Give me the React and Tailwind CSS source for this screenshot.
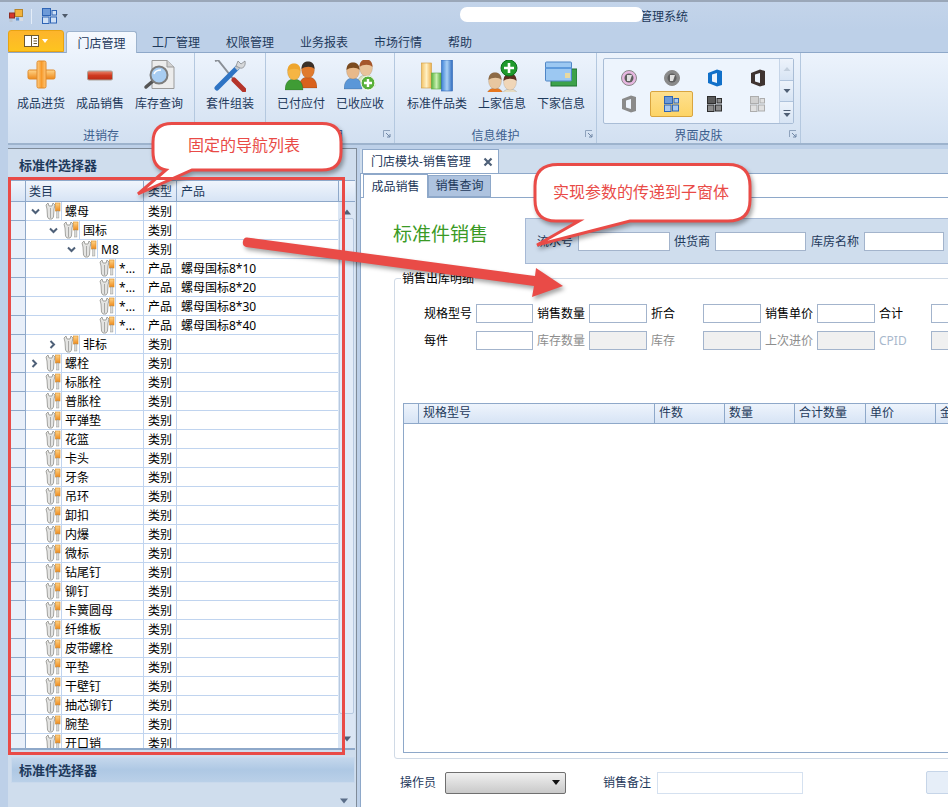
import React from 'react';

const treeRows = [
  { name: '螺母', depth: 0, open: true },
  { name: '国标', depth: 1, open: true },
  { name: 'M8', depth: 2, open: true },
  { name: '*...', depth: 3, type: '产品', product: '螺母国标8*10' },
  { name: '*...', depth: 3, type: '产品', product: '螺母国标8*20' },
  { name: '*...', depth: 3, type: '产品', product: '螺母国标8*30' },
  { name: '*...', depth: 3, type: '产品', product: '螺母国标8*40' },
  { name: '非标', depth: 1, open: false },
  { name: '螺栓', depth: 0, open: false },
  ...['标胀栓', '普胀栓', '平弹垫', '花篮', '卡头', '牙条', '吊环', '卸扣', '内爆', '微标', '钻尾钉', '铆钉', '卡簧圆母', '纤维板', '皮带螺栓', '平垫', '干壁钉', '抽芯铆钉', '腕垫', '开口销'].map((name) => ({ name, depth: 0 })),
];

const navTabs = ['工厂管理', '权限管理', '业务报表', '市场行情', '帮助'];

function Defs() {
  return (
    <svg width="0" height="0" className="absolute">
      <defs>
        <linearGradient id="orangeV" x1="0" y1="0" x2="0" y2="1">
          <stop offset="0" stopColor="#ffd58a" />
          <stop offset="1" stopColor="#ee8a1c" />
        </linearGradient>
        <linearGradient id="orangeH" x1="0" y1="0" x2="1" y2="0">
          <stop offset="0" stopColor="#ffcf86" />
          <stop offset="0.5" stopColor="#f79a2b" />
          <stop offset="1" stopColor="#ffc779" />
        </linearGradient>
        <linearGradient id="redV" x1="0" y1="0" x2="0" y2="1">
          <stop offset="0" stopColor="#e9876d" />
          <stop offset="0.5" stopColor="#cf3a20" />
          <stop offset="1" stopColor="#b92a15" />
        </linearGradient>
        <linearGradient id="blueV" x1="0" y1="0" x2="1" y2="0">
          <stop offset="0" stopColor="#3f82d8" />
          <stop offset="0.5" stopColor="#a9d0f5" />
          <stop offset="1" stopColor="#2f6cc0" />
        </linearGradient>
        <linearGradient id="yellowV" x1="0" y1="0" x2="1" y2="0">
          <stop offset="0" stopColor="#f3c265" />
          <stop offset="0.5" stopColor="#fff0c4" />
          <stop offset="1" stopColor="#eeb04c" />
        </linearGradient>
        <linearGradient id="greenV" x1="0" y1="0" x2="1" y2="0">
          <stop offset="0" stopColor="#5ab540" />
          <stop offset="0.5" stopColor="#c9efb0" />
          <stop offset="1" stopColor="#4ba536" />
        </linearGradient>
      </defs>
    </svg>
  );
}

function TreeIcon() {
  return (
    <svg width="16" height="18" viewBox="0 0 16 18" className="shrink-0">
      <path d="M1 3 L3 1 L4 4 L7 4 L8 1 L10 3 L9 7 L8.5 15 L7 17 L4 17 L2.5 15 L2 7 Z" fill="#e4e4e2" stroke="#8f8f8c" strokeWidth="0.8" />
      <path d="M5.5 6 V16" stroke="#a8a8a6" strokeWidth="1" />
      <rect x="10.5" y="1" width="4.5" height="8" fill="url(#orangeV)" stroke="#d98a22" strokeWidth="0.6" />
      <rect x="11.7" y="9" width="2.2" height="7" fill="#d9d9d6" stroke="#9a9a96" strokeWidth="0.5" />
    </svg>
  );
}

function Person({ x, y, skin, hair, body }) {
  return (
    <g transform={`translate(${x} ${y})`}>
      <path d="M0 27 C0 19 4 16 9 16 C14 16 18 19 18 27 Z" fill={body} stroke="#00000040" strokeWidth="0.6" />
      <ellipse cx="9" cy="9" rx="6.5" ry="8" fill={skin} stroke="#00000030" strokeWidth="0.5" />
      <path d="M2.5 8 C2.5 2 6 0.5 9 0.5 C12 0.5 15.5 2 15.5 8 C13 5 6 5 2.5 8 Z" fill={hair} />
    </g>
  );
}

function RibbonIcon({ kind }) {
  if (kind === 'plus') {
    return (
      <svg width="32" height="32" viewBox="0 0 32 32">
        <rect x="3" y="10" width="27" height="9" rx="1.5" fill="url(#orangeV)" stroke="#e08a2b" />
        <rect x="12" y="1" width="9" height="27" rx="1.5" fill="url(#orangeH)" stroke="#e08a2b" />
      </svg>
    );
  }
  if (kind === 'minus') {
    return (
      <svg width="32" height="32" viewBox="0 0 32 32">
        <rect x="3.5" y="11" width="25" height="9" rx="1.5" fill="url(#redV)" stroke="#a8a29a" />
      </svg>
    );
  }
  if (kind === 'search') {
    return (
      <svg width="32" height="32" viewBox="0 0 32 32">
        <path d="M9 0.5 H24 L31 7 V28.5 H9 Z" fill="#ececec" stroke="#9b9b9b" />
        <path d="M24 0.5 V7 H31" fill="#d2d2d2" stroke="#9b9b9b" />
        <path d="M10 21 L3 27" stroke="#555" strokeWidth="3.5" strokeLinecap="round" />
        <circle cx="16" cy="15" r="8.5" fill="#a8cdf2" stroke="#7d7d7d" strokeWidth="2" />
        <path d="M11 14 C12 11 15 10 18 10" stroke="#fff" strokeWidth="1.5" fill="none" />
      </svg>
    );
  }
  if (kind === 'tools') {
    return (
      <svg width="32" height="32" viewBox="0 0 32 32">
        <path d="M1 1 L4 0 L24 25" stroke="#8a8f96" strokeWidth="2" fill="none" />
        <path d="M20 20 L30 30" stroke="#b5342a" strokeWidth="5" strokeLinecap="round" />
        <path d="M23 8 L3 28" stroke="#2f74c4" strokeWidth="5" strokeLinecap="round" />
        <path d="M22 9 L27 4" stroke="#c4c8cc" strokeWidth="4" />
        <path d="M24 1 L27 4 L31 1 C32 6 29 9 26 8 L22 6 Z" fill="#d6d8da" stroke="#7b7f84" strokeWidth="0.7" />
      </svg>
    );
  }
  if (kind === 'paid') {
    return (
      <svg width="32" height="32" viewBox="0 0 32 32">
        <Person x={14} y={1} skin="#e07a2e" hair="#3a3028" body="#d9611c" />
        <Person x={0} y={3} skin="#f5b544" hair="#eea52d" body="#3f9c35" />
      </svg>
    );
  }
  if (kind === 'received') {
    return (
      <svg width="32" height="32" viewBox="0 0 32 32">
        <Person x={13} y={-1} skin="#e8c39a" hair="#a5562b" body="#d8e3c0" />
        <Person x={0} y={2} skin="#e8b98a" hair="#7a4a1f" body="#5b97d8" />
        <circle cx="24" cy="23" r="7" fill="#58b03a" stroke="#fff" strokeWidth="1" />
        <path d="M24 19 V27 M20 23 H28" stroke="#fff" strokeWidth="2.4" />
      </svg>
    );
  }
  if (kind === 'chart') {
    return (
      <svg width="32" height="32" viewBox="0 0 32 32">
        <rect x="0.5" y="3" width="10" height="25" fill="url(#yellowV)" stroke="#cf9b3d" strokeWidth="0.6" />
        <rect x="10.5" y="13" width="10" height="16" fill="url(#greenV)" stroke="#5ba745" strokeWidth="0.6" />
        <rect x="20.5" y="0" width="11" height="31" fill="url(#blueV)" stroke="#2d66b4" strokeWidth="0.6" />
      </svg>
    );
  }
  if (kind === 'upstream') {
    return (
      <svg width="32" height="32" viewBox="0 0 32 32">
        <Person x={0} y={12} skin="#e8c7a0" hair="#8d6a45" body="#e8771e" />
        <Person x={15} y={13} skin="#f0d6b8" hair="#5a2f20" body="#e6dcc4" />
        <circle cx="23" cy="8" r="8" fill="#1f9a2c" stroke="#0d6f1c" />
        <path d="M23 3 V13 M18 8 H28" stroke="#fff" strokeWidth="2.6" />
      </svg>
    );
  }
  return (
    <svg width="32" height="32" viewBox="0 0 32 32">
      <rect x="6" y="9" width="26" height="17" fill="#3da24a" stroke="#1f7030" />
      <rect x="0.5" y="2" width="26" height="19" rx="1" fill="#9cc8f2" stroke="#4f86c6" />
      <rect x="0.5" y="7" width="26" height="2" fill="#5f9bdc" />
      <rect x="20" y="13" width="5" height="5" fill="#e8d9a0" />
    </svg>
  );
}

function RibbonButton({ icon, label }) {
  return (
    <div className="flex flex-col items-center shrink-0">
      <div className="h-[32px] w-[32px] mt-[7px]">
        <RibbonIcon kind={icon} />
      </div>
      <span className="mt-[4px] leading-[16px] whitespace-nowrap">{label}</span>
    </div>
  );
}

function Launcher() {
  return (
    <svg width="8" height="8" viewBox="0 0 8 8" className="absolute right-[3px] bottom-[5px]">
      <path d="M0.5 7 V0.5 H7" stroke="#8fa3bd" fill="none" />
      <path d="M3 3 L7 7 M7 4 V7 H4" stroke="#6f86a5" fill="none" />
    </svg>
  );
}

function RibbonGroup({ width, title, className, titleClass = 'justify-center', launcher, children }) {
  return (
    <div className="relative flex flex-col shrink-0 border-r border-[#b4c8df] h-full" style={{ width }}>
      <div className={`flex h-[72px] ${className}`}>{children}</div>
      <div className={`flex-1 flex items-center text-[#3d5f8f] leading-none pt-[3px] ${titleClass}`}>{title}</div>
      {launcher && <Launcher />}
    </div>
  );
}

function OfficeLogo({ color }) {
  return (
    <svg width="16" height="18" viewBox="0 0 16 18">
      <path fillRule="evenodd" d="M1 4 L10 0.5 L15 2 V16 L10 17.5 L1 14 Z M5 5.5 V12.5 L10 14 V4 Z" fill={color} />
    </svg>
  );
}

function VistaLogo({ fill }) {
  return (
    <svg width="16" height="16" viewBox="0 0 16 16">
      <circle cx="8" cy="8" r="7.5" fill={fill} stroke="#8a8a8a" />
      <circle cx="8" cy="8" r="4.5" fill="#5f5f5f" />
      <path d="M6 5 H11 L9 11 H6 Z" fill="#e0e0e0" />
    </svg>
  );
}

function SquaresLogo({ a, b, c }) {
  return (
    <svg width="15" height="16" viewBox="0 0 15 16">
      <rect x="0.5" y="0.5" width="8" height="7" fill={a} stroke={c} />
      <rect x="10" y="2.5" width="4.5" height="4.5" fill={b} stroke={c} />
      <rect x="0.5" y="9" width="6.5" height="6.5" fill={b} stroke={c} />
      <rect x="8.5" y="9" width="6" height="6" fill={b} stroke={c} />
    </svg>
  );
}

function SkinCell({ selected, children }) {
  return (
    <div className={`flex items-center justify-center h-[26px] rounded-[2px] ${selected ? 'bg-gradient-to-b from-[#fee08e] to-[#fdd465] border border-[#d9a53f]' : ''}`}>
      {children}
    </div>
  );
}

function ScrollStep({ path, faded }) {
  return (
    <div className="flex-1 flex items-center justify-center border-b border-[#afc3dc] last:border-b-0 bg-gradient-to-b from-[#edf3fb] to-[#d7e4f4]">
      <svg width="8" height="8" viewBox="0 0 8 8">
        <path d={path} fill={faded ? '#c3cfdd' : '#4f5f75'} />
      </svg>
    </div>
  );
}

function Ribbon() {
  return (
    <div className="ml-2 h-[93px] flex border-t border-[#8ea8c9] border-b-2 border-b-[#9db3cd] bg-gradient-to-b from-[#ecf3fc] to-[#d2e0f1] text-[#1e395b]">
      <RibbonGroup width={187} title="进销存" className="pl-[9px] gap-[11px]">
        <RibbonButton icon="plus" label="成品进货" />
        <RibbonButton icon="minus" label="成品销售" />
        <RibbonButton icon="search" label="库存查询" />
      </RibbonGroup>
      <RibbonGroup width={71} className="justify-center">
        <RibbonButton icon="tools" label="套件组装" />
      </RibbonGroup>
      <RibbonGroup width={129} title="目" titleClass="justify-end pr-[50px]" launcher className="pl-[11px] gap-[11px]">
        <RibbonButton icon="paid" label="已付应付" />
        <RibbonButton icon="received" label="已收应收" />
      </RibbonGroup>
      <RibbonGroup width={202} title="信息维护" launcher className="pl-[12px] gap-[11px]">
        <RibbonButton icon="chart" label="标准件品类" />
        <RibbonButton icon="upstream" label="上家信息" />
        <RibbonButton icon="cards" label="下家信息" />
      </RibbonGroup>
      <RibbonGroup width={204} title="界面皮肤" launcher className="pl-[6px] pt-[5px]">
        <div className="flex h-[66px] w-[191px] border border-[#a9bdd6] rounded-[2px] bg-[#edf4fd]">
          <div className="w-[175px] grid grid-cols-4 pl-[3px] pt-[6px] auto-rows-[26px]">
            <SkinCell><VistaLogo fill="#e6b7e0" /></SkinCell>
            <SkinCell><VistaLogo fill="#8a8a8a" /></SkinCell>
            <SkinCell><OfficeLogo color="#1170c9" /></SkinCell>
            <SkinCell><OfficeLogo color="#3f3431" /></SkinCell>
            <SkinCell><OfficeLogo color="#8a8a8a" /></SkinCell>
            <SkinCell selected><SquaresLogo a="#6d9ad8" b="#a9c8ee" c="#2f65b5" /></SkinCell>
            <SkinCell><SquaresLogo a="#5a5a5a" b="#8c8c8c" c="#2e2e2e" /></SkinCell>
            <SkinCell><SquaresLogo a="#d0d0d0" b="#e0e0e0" c="#adadad" /></SkinCell>
          </div>
          <div className="flex-1 flex flex-col border-l border-[#c6d5e8]">
            <ScrollStep path="M4 2 L7.5 6 H0.5 Z" faded />
            <ScrollStep path="M0.5 2 H7.5 L4 6 Z" />
            <ScrollStep path="M0.5 1 H7.5 V2 H0.5 Z M0.5 4 H7.5 L4 8 Z" />
          </div>
        </div>
      </RibbonGroup>
    </div>
  );
}

function TreeRow({ row }) {
  return (
    <div className="flex h-[19px] shrink-0 leading-[19px] text-black">
      <div className="w-[15px] shrink-0 bg-[#e8eff9] border-r border-b border-[#8ea8c9]" />
      <div className="w-[117px] shrink-0 flex items-center overflow-hidden border-b border-[#c0d4ef]" style={{ paddingLeft: 4 + row.depth * 18 }}>
        <div className="w-[15px] h-full shrink-0 pl-[1px] flex items-center justify-start">
          {row.open === true && (
            <svg width="9" height="7" viewBox="0 0 9 7"><path d="M1 1.5 L4.5 5 L8 1.5" fill="none" stroke="#4e6078" strokeWidth="2" /></svg>
          )}
          {row.open === false && (
            <svg width="7" height="9" viewBox="0 0 7 9"><path d="M1.5 1 L5 4.5 L1.5 8" fill="none" stroke="#4e6078" strokeWidth="2" /></svg>
          )}
        </div>
        <TreeIcon />
        <div className="flex-1 h-full pl-[3px] border-l border-[#c0d4ef] whitespace-nowrap">{row.name}</div>
      </div>
      <div className="w-[33px] shrink-0 pl-[4px] border-l border-b border-[#c0d4ef]">{row.type || '类别'}</div>
      <div className="flex-1 pl-[4px] border-l border-b border-[#c0d4ef]">{row.product}</div>
    </div>
  );
}

function LeftPanel() {
  return (
    <div className="w-[349px] ml-2 mt-[3px] shrink-0 flex flex-col bg-[#cfdded] border-t border-r border-[#7f8b99]">
      <div className="h-[31px] flex items-center pl-[11px] pt-[3px] font-bold text-[#1e395b] text-[13px]">标准件选择器</div>
      <div className="ml-[3px] mr-[1px] flex h-[22px] shrink-0 text-[#1e395b] leading-[22px] border-t border-b border-[#8ea8c9] bg-gradient-to-b from-[#f0f5fc] to-[#d7e4f5]">
        <div className="w-[15px] border-r border-[#8ea8c9]" />
        <div className="w-[117px] pl-[3px]">类目</div>
        <div className="w-[33px] pl-[4px] border-l border-[#8ea8c9]">类型</div>
        <div className="w-[162px] pl-[4px] border-l border-[#8ea8c9]">产品</div>
        <div className="flex-1 border-l border-[#8ea8c9]" />
      </div>
      <div className="ml-[3px] mr-[1px] flex h-[548px] shrink-0 overflow-hidden border-b-2 border-[#8ea8c9]">
        <div className="w-[327px] shrink-0 flex flex-col bg-white">
          {treeRows.map((row, i) => (
            <TreeRow key={i} row={row} />
          ))}
        </div>
        <div className="flex-1 flex flex-col items-center bg-[#dbe6f4]">
          <svg width="8" height="6" viewBox="0 0 8 6" className="mt-[7px]"><path d="M4 0.5 L8 5.5 H0 Z" fill="#4f5f75" /></svg>
          <div className="w-[15px] flex-1 mt-[3px] mb-[22px] border border-[#b7c9e0] rounded-[2px] bg-[#e3ecf8]" />
          <svg width="8" height="6" viewBox="0 0 8 6" className="mb-[6px]"><path d="M0 0.5 H8 L4 5.5 Z" fill="#4f5f75" /></svg>
        </div>
      </div>
      <div className="ml-[3px] mr-[1px] mt-[7px] h-[26px] shrink-0 flex items-center pl-[7px] pt-[2px] font-bold text-[13px] text-[#1e395b] border border-[#c9d9ec] bg-gradient-to-b from-[#c4d7ec] via-[#aec8e4] to-[#bad0e8]">标准件选择器</div>
      <div className="flex-1 flex justify-end items-end pr-[8px] pb-[3px]">
        <svg width="8" height="6" viewBox="0 0 8 6"><path d="M0 0.5 H8 L4 5.5 Z" fill="#5a6d88" /></svg>
      </div>
    </div>
  );
}

function Field({ label, disabled, inputWidth = 'w-[58px]', labelClass = 'text-black' }) {
  return (
    <div className="flex items-center shrink-0 mr-[4px]">
      <span className={`w-[52px] shrink-0 whitespace-nowrap ${labelClass}`}>{label}</span>
      <input disabled={disabled} className={`${inputWidth} h-[19px] border border-[#a3b4cc] ${disabled ? 'bg-[#f0f0f0]' : 'bg-white'}`} />
    </div>
  );
}

function RightPanel() {
  const grayLabel = 'text-[#8d8d8d]';
  return (
    <div className="flex-1 min-w-0 ml-[3px] mt-[4px] flex flex-col overflow-hidden">
      <div className="h-[24px] shrink-0 bg-[#cfdded] pl-[2px] flex">
        <div className="w-[137px] bg-white border border-b-0 border-[#8ea8c9] flex items-center pl-[8px] text-[#1e395b] whitespace-nowrap">
          门店模块-销售管理
          <svg width="10" height="10" viewBox="0 0 10 10" className="ml-[12px]"><path d="M1.5 1.5 L8.5 8.5 M8.5 1.5 L1.5 8.5" stroke="#4e6078" strokeWidth="2.2" /></svg>
        </div>
      </div>
      <div className="flex-1 bg-white border-l border-t border-[#8ea8c9] flex flex-col min-h-0">
        <div className="h-[24px] shrink-0 flex items-end pl-[2px] border-b border-[#8ea8c9]">
          <div className="w-[65px] h-[24px] -mb-[1px] bg-white border border-b-0 border-[#8ea8c9] flex items-center justify-center text-[#1e395b]">成品销售</div>
          <div className="w-[63px] h-[22px] bg-[#aec3df] border border-[#8ea8c9] flex items-center justify-center text-[#1e395b]">销售查询</div>
        </div>
        <div className="flex mt-[20px] shrink-0">
          <div className="w-[164px] pl-[32px] pt-[3px] shrink-0 text-[19px] leading-[26px] text-[#3a9a25]">标准件销售</div>
          <div className="w-[500px] shrink-0 h-[46px] bg-[#cfdded] border border-[#a6b9d5] flex items-center pl-[11px] pt-[1px] text-[#1e395b] whitespace-nowrap">
            <span className="w-[41px] shrink-0">流水号</span>
            <input className="w-[92px] h-[19px] shrink-0 bg-white border border-[#a3b4cc]" />
            <span className="w-[41px] shrink-0 ml-[4px]">供货商</span>
            <input className="w-[91px] h-[19px] shrink-0 bg-white border border-[#a3b4cc]" />
            <span className="w-[53px] shrink-0 ml-[5px]">库房名称</span>
            <input className="w-[80px] h-[19px] shrink-0 bg-white border border-[#a3b4cc]" />
          </div>
        </div>
        <div className="relative ml-[33px] mt-[14px] h-[481px] w-[620px] shrink-0 border border-[#d0dae6] rounded-[3px]">
          <span className="absolute left-[6px] -top-[6px] px-[1px] bg-white text-black leading-none whitespace-nowrap">销售出库明细</span>
          <div className="flex pl-[29px] pt-[25px]">
            <Field label="规格型号" inputWidth="w-[57px]" />
            <Field label="销售数量" />
            <Field label="折合" />
            <Field label="销售单价" />
            <Field label="合计" />
          </div>
          <div className="flex pl-[29px] mt-[8px]">
            <Field label="每件" inputWidth="w-[57px]" />
            <Field label="库存数量" disabled labelClass={grayLabel} />
            <Field label="库存" disabled labelClass={grayLabel} />
            <Field label="上次进价" disabled labelClass={grayLabel} />
            <Field label="CPID" disabled labelClass="text-[#a8b8cc]" />
          </div>
          <div className="ml-[8px] mt-[53px] h-[350px] border border-[#8ea8c9] flex flex-col">
            <div className="flex h-[20px] shrink-0 leading-[18px] text-[#1e395b] border-b border-[#8ea8c9] bg-gradient-to-b from-[#eef4fc] to-[#d7e4f5]">
              <div className="w-[15px] shrink-0 border-r border-[#8ea8c9]" />
              <div className="w-[236px] shrink-0 pl-[4px] border-r border-[#8ea8c9]">规格型号</div>
              <div className="w-[70px] shrink-0 pl-[4px] border-r border-[#8ea8c9]">件数</div>
              <div className="w-[70px] shrink-0 pl-[4px] border-r border-[#8ea8c9]">数量</div>
              <div className="w-[71px] shrink-0 pl-[4px] border-r border-[#8ea8c9]">合计数量</div>
              <div className="w-[70px] shrink-0 pl-[4px] border-r border-[#8ea8c9]">单价</div>
              <div className="pl-[4px] whitespace-nowrap">金额</div>
            </div>
          </div>
        </div>
        <div className="flex items-center mt-[12px] pl-[39px] text-[#1e395b] whitespace-nowrap">
          <span className="w-[45px] shrink-0">操作员</span>
          <div className="w-[121px] h-[22px] shrink-0 rounded-[2px] border border-[#6f6f6f] bg-gradient-to-b from-[#f0f0f0] to-[#c9c9c9] flex items-center justify-end pr-[5px]">
            <svg width="8" height="5" viewBox="0 0 8 5"><path d="M0 0 H8 L4 5 Z" fill="#111" /></svg>
          </div>
          <span className="w-[54px] shrink-0 ml-[37px]">销售备注</span>
          <input className="w-[146px] h-[22px] shrink-0 bg-white border border-[#d5e1f0]" />
          <div className="w-[40px] h-[23px] shrink-0 ml-[123px] rounded-[2px] border border-[#c6d5e8] bg-[#e6eef8]" />
        </div>
      </div>
    </div>
  );
}

function Annotations() {
  const red = '#e94b47';
  return (
    <>
      <svg width="948" height="807" viewBox="0 0 948 807" className="absolute left-0 top-0 pointer-events-none drop-shadow-[2px_3px_2px_rgba(0,0,0,0.35)]">
        <path d="M172 123.5 H322 Q341 123.5 341 142 V152 Q341 170 322 170 H192 L138 194 L166 170 Q153 168 153 152 V142 Q153 123.5 172 123.5 Z" fill="#fff" stroke={red} strokeWidth="3" />
        <path d="M558 164.5 H728 Q750 164.5 750 186 V200 Q750 221 728 221 H630 L537 245 L579 221 H556 Q535 221 535 200 V186 Q535 164.5 558 164.5 Z" fill="#fff" stroke={red} strokeWidth="3" />
        <path d="M247 237.5 L535 276 L536 268 L563 286 L532 297 L534 286 L246 247 Q242 246 243 241 Q244 237 247 237.5 Z" fill={red} />
      </svg>
      <div className="absolute left-[8px] top-[177px] w-[337px] h-[578px] border-[3px] border-[#e94b47] pointer-events-none" />
      <div className="absolute left-[149px] top-[134px] w-[190px] text-center text-[16px] leading-[22px] text-[#e94b47]">固定的导航列表</div>
      <div className="absolute left-[553px] top-[181px] text-[16px] leading-[22px] text-[#e94b47] whitespace-nowrap">实现参数的传递到子窗体</div>
    </>
  );
}

export default function App() {
  return (
    <div className="relative w-[948px] h-[807px] overflow-hidden bg-[#bdd0e8] text-[12px] font-['Noto_Sans','Noto_Sans_CJK_SC',sans-serif]">
      <Defs />
      {/* Title bar */}
      <div className="relative h-[30px] flex items-center border-t-2 border-[#9aa7b8] bg-gradient-to-b from-[#c3d4ea] to-[#bdd0e8]">
        <div className="ml-[9px] w-[14px] h-[14px]">
          <svg width="14" height="14" viewBox="0 0 14 14">
            <rect x="6" y="0.5" width="7.5" height="7" fill="#f2b33d" stroke="#b7852a" />
            <rect x="0.5" y="4" width="5" height="5" fill="#d6372c" stroke="#8e2a22" />
            <rect x="7" y="8.5" width="3" height="3" fill="#5a8fd0" />
            <rect x="0.5" y="10" width="3" height="3" fill="#b9c4d2" />
            <rect x="11" y="9" width="3" height="3" fill="#d8dde4" />
          </svg>
        </div>
        <div className="ml-[8px] w-[1px] h-[15px] bg-[#e4edf8]" />
        <div className="ml-[10px]">
          <SquaresLogo a="#6d9ad8" b="#cfe0f5" c="#2f65b5" />
        </div>
        <svg width="6" height="4" viewBox="0 0 6 4" className="ml-[5px]"><path d="M0 0 H6 L3 4 Z" fill="#4e5a6b" /></svg>
        <span className="absolute left-[640px] top-[7px] text-[#1e395b] leading-[16px] whitespace-nowrap">管理系统</span>
        <div className="absolute left-[460px] top-[5px] w-[183px] h-[15px] bg-white rounded-[7px]" />
      </div>
      {/* Tabs */}
      <div className="h-[22px] flex items-end pl-2 text-[#1e395b]">
        <div className="w-[56px] h-[22px] flex items-center justify-center gap-[3px] rounded-t-[3px] border border-[#e8a312] bg-gradient-to-b from-[#fdb42b] to-[#fdc41f]">
          <svg width="15" height="12" viewBox="0 0 15 12"><rect x="0.5" y="0.5" width="14" height="11" fill="#fff" stroke="#6e5a30" /><path d="M7.5 0.5 V11.5 M9.5 3.5 H13 M9.5 6 H13 M9.5 8.5 H13" stroke="#6e5a30" /></svg>
          <svg width="6" height="4" viewBox="0 0 6 4"><path d="M0 0 H6 L3 4 Z" fill="#fff" /></svg>
        </div>
        <div className="ml-[2px] w-[71px] h-[22px] -mb-[1px] z-10 flex items-center justify-center pt-[2px] rounded-t-[3px] border border-b-0 border-[#9db3cd] bg-gradient-to-b from-[#f5f9fe] to-[#ecf3fc]">门店管理</div>
        <div className="flex ml-[15px] gap-[26px] h-[22px] pt-[4px] items-center whitespace-nowrap">
          {navTabs.map((t) => (
            <span key={t}>{t}</span>
          ))}
        </div>
      </div>
      <Ribbon />
      {/* Main */}
      <div className="h-[662px] flex">
        <LeftPanel />
        <RightPanel />
      </div>
      <Annotations />
    </div>
  );
}
